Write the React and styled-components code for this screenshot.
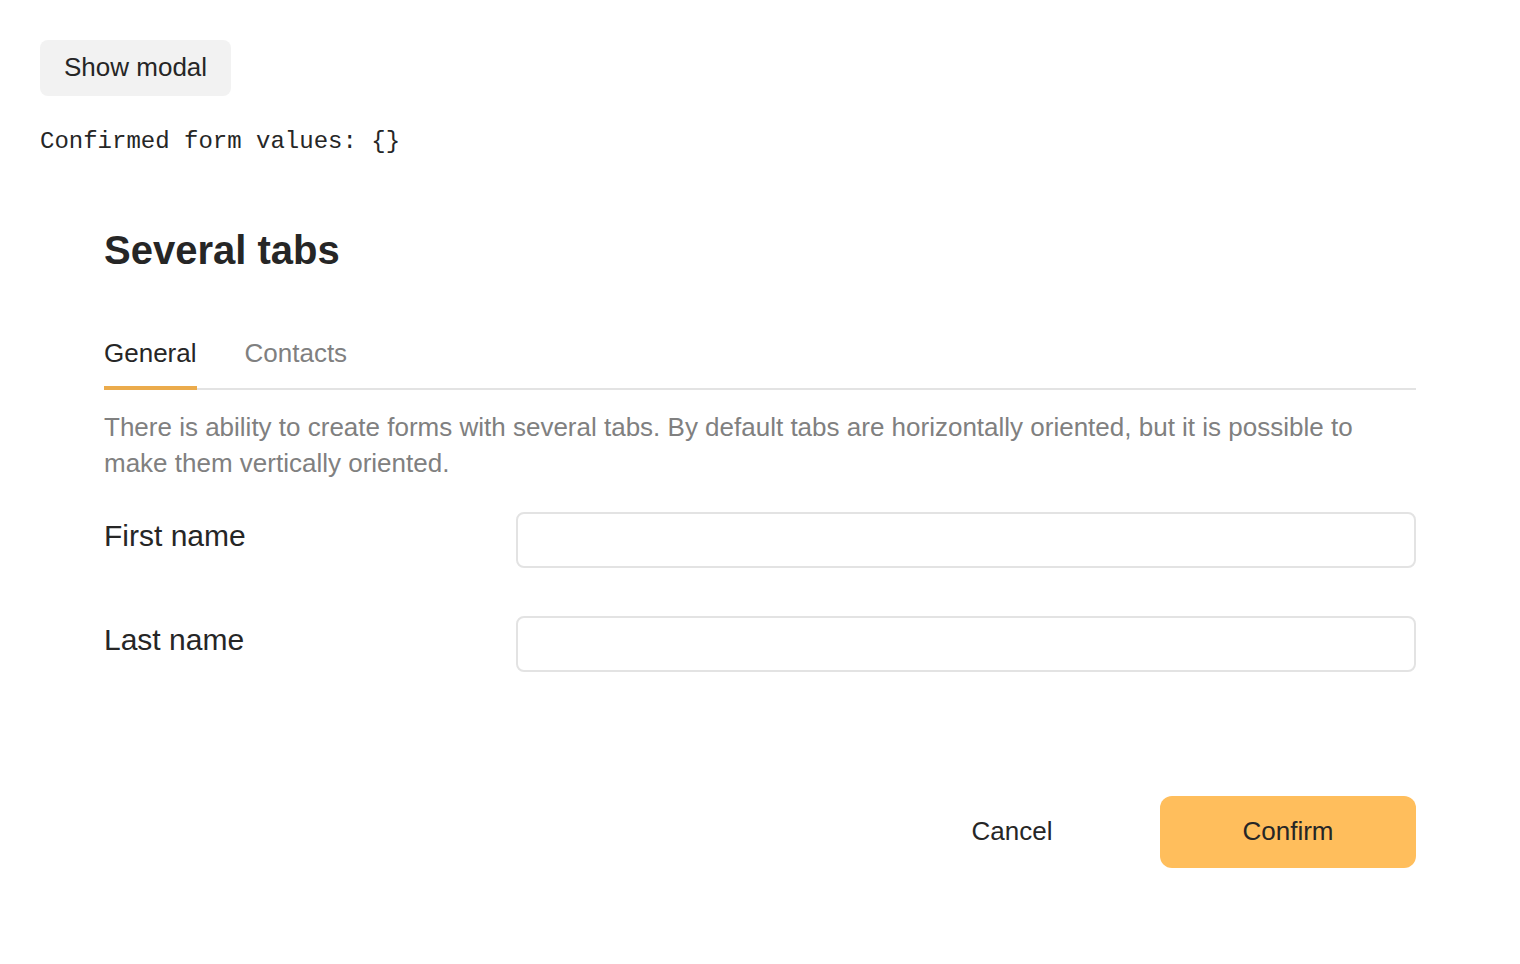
import React, { useState } from "react";
import styled, { createGlobalStyle } from "styled-components";

const Global = createGlobalStyle`
  html, body { margin: 0; padding: 0; background: #ffffff; }
  body { font-family: "Liberation Sans", Arial, sans-serif; color: #262626; }
  * { box-sizing: border-box; }
`;

const Page = styled.div`
  padding: 40px;
`;

const ShowButton = styled.button`
  display: block;
  height: 56px;
  padding: 0 24px 2px;
  border: none;
  border-radius: 8px;
  background: #f2f2f2;
  color: #262626;
  font-family: "Liberation Sans", Arial, sans-serif;
  font-size: 26px;
  cursor: pointer;
`;

const Values = styled.p`
  margin: 28px 0 0;
  font-family: "Liberation Mono", "Courier New", monospace;
  font-size: 24px;
  line-height: 36px;
  color: #262626;
`;

const Modal = styled.section`
  margin: 66px 64px 0;
  display: flex;
  flex-direction: column;
`;

const Title = styled.h2`
  margin: 0;
  font-size: 40px;
  line-height: 48px;
  font-weight: 700;
  color: #262626;
`;

const TabList = styled.div`
  margin-top: 59px;
  display: flex;
  gap: 48px;
  border-bottom: 2px solid #e3e3e3;
`;

const Tab = styled.button`
  padding: 1px 0 13px;
  margin-bottom: -2px;
  border: none;
  border-bottom: 4px solid ${(p) => (p.$active ? "#ebab4c" : "transparent")};
  background: none;
  font-family: "Liberation Sans", Arial, sans-serif;
  font-size: 26px;
  line-height: 39px;
  color: ${(p) => (p.$active ? "#262626" : "#808080")};
  cursor: pointer;
`;

const Description = styled.p`
  margin: 19px 0 0;
  font-size: 26px;
  line-height: 36px;
  color: #808080;
`;

const Fields = styled.div`
  margin-top: 31px;
  display: flex;
  flex-direction: column;
  gap: 48px;
`;

const Row = styled.label`
  display: grid;
  grid-template-columns: 412px 1fr;
  align-items: start;
`;

const LabelText = styled.span`
  font-size: 30px;
  line-height: 48px;
  color: #262626;
`;

const Input = styled.input`
  height: 56px;
  width: 100%;
  border: 2px solid #e3e3e3;
  border-radius: 8px;
  padding: 0 16px;
  font-family: "Liberation Sans", Arial, sans-serif;
  font-size: 24px;
  outline: none;
`;

const Footer = styled.div`
  margin-top: 124px;
  display: flex;
  justify-content: flex-end;
  gap: 20px;
`;

const ActionButton = styled.button`
  width: 256px;
  height: 72px;
  padding: 0 0 2px;
  border: none;
  border-radius: 12px;
  background: ${(p) => (p.$primary ? "#ffbe5c" : "transparent")};
  color: #262626;
  font-family: "Liberation Sans", Arial, sans-serif;
  font-size: 26px;
  cursor: pointer;
`;

export default function App() {
  const [tab, setTab] = useState("general");
  return (
    <>
      <Global />
      <Page>
        <ShowButton>Show modal</ShowButton>
        <Values>Confirmed form values: {"{}"}</Values>
        <Modal>
          <Title>Several tabs</Title>
          <TabList>
            <Tab $active={tab === "general"} onClick={() => setTab("general")}>General</Tab>
            <Tab $active={tab === "contacts"} onClick={() => setTab("contacts")}>Contacts</Tab>
          </TabList>
          <Description>
            There is ability to create forms with several tabs. By default tabs are horizontally oriented, but it is possible to make them vertically oriented.
          </Description>
          <Fields>
            <Row>
              <LabelText>First name</LabelText>
              <Input />
            </Row>
            <Row>
              <LabelText>Last name</LabelText>
              <Input />
            </Row>
          </Fields>
          <Footer>
            <ActionButton>Cancel</ActionButton>
            <ActionButton $primary>Confirm</ActionButton>
          </Footer>
        </Modal>
      </Page>
    </>
  );
}
